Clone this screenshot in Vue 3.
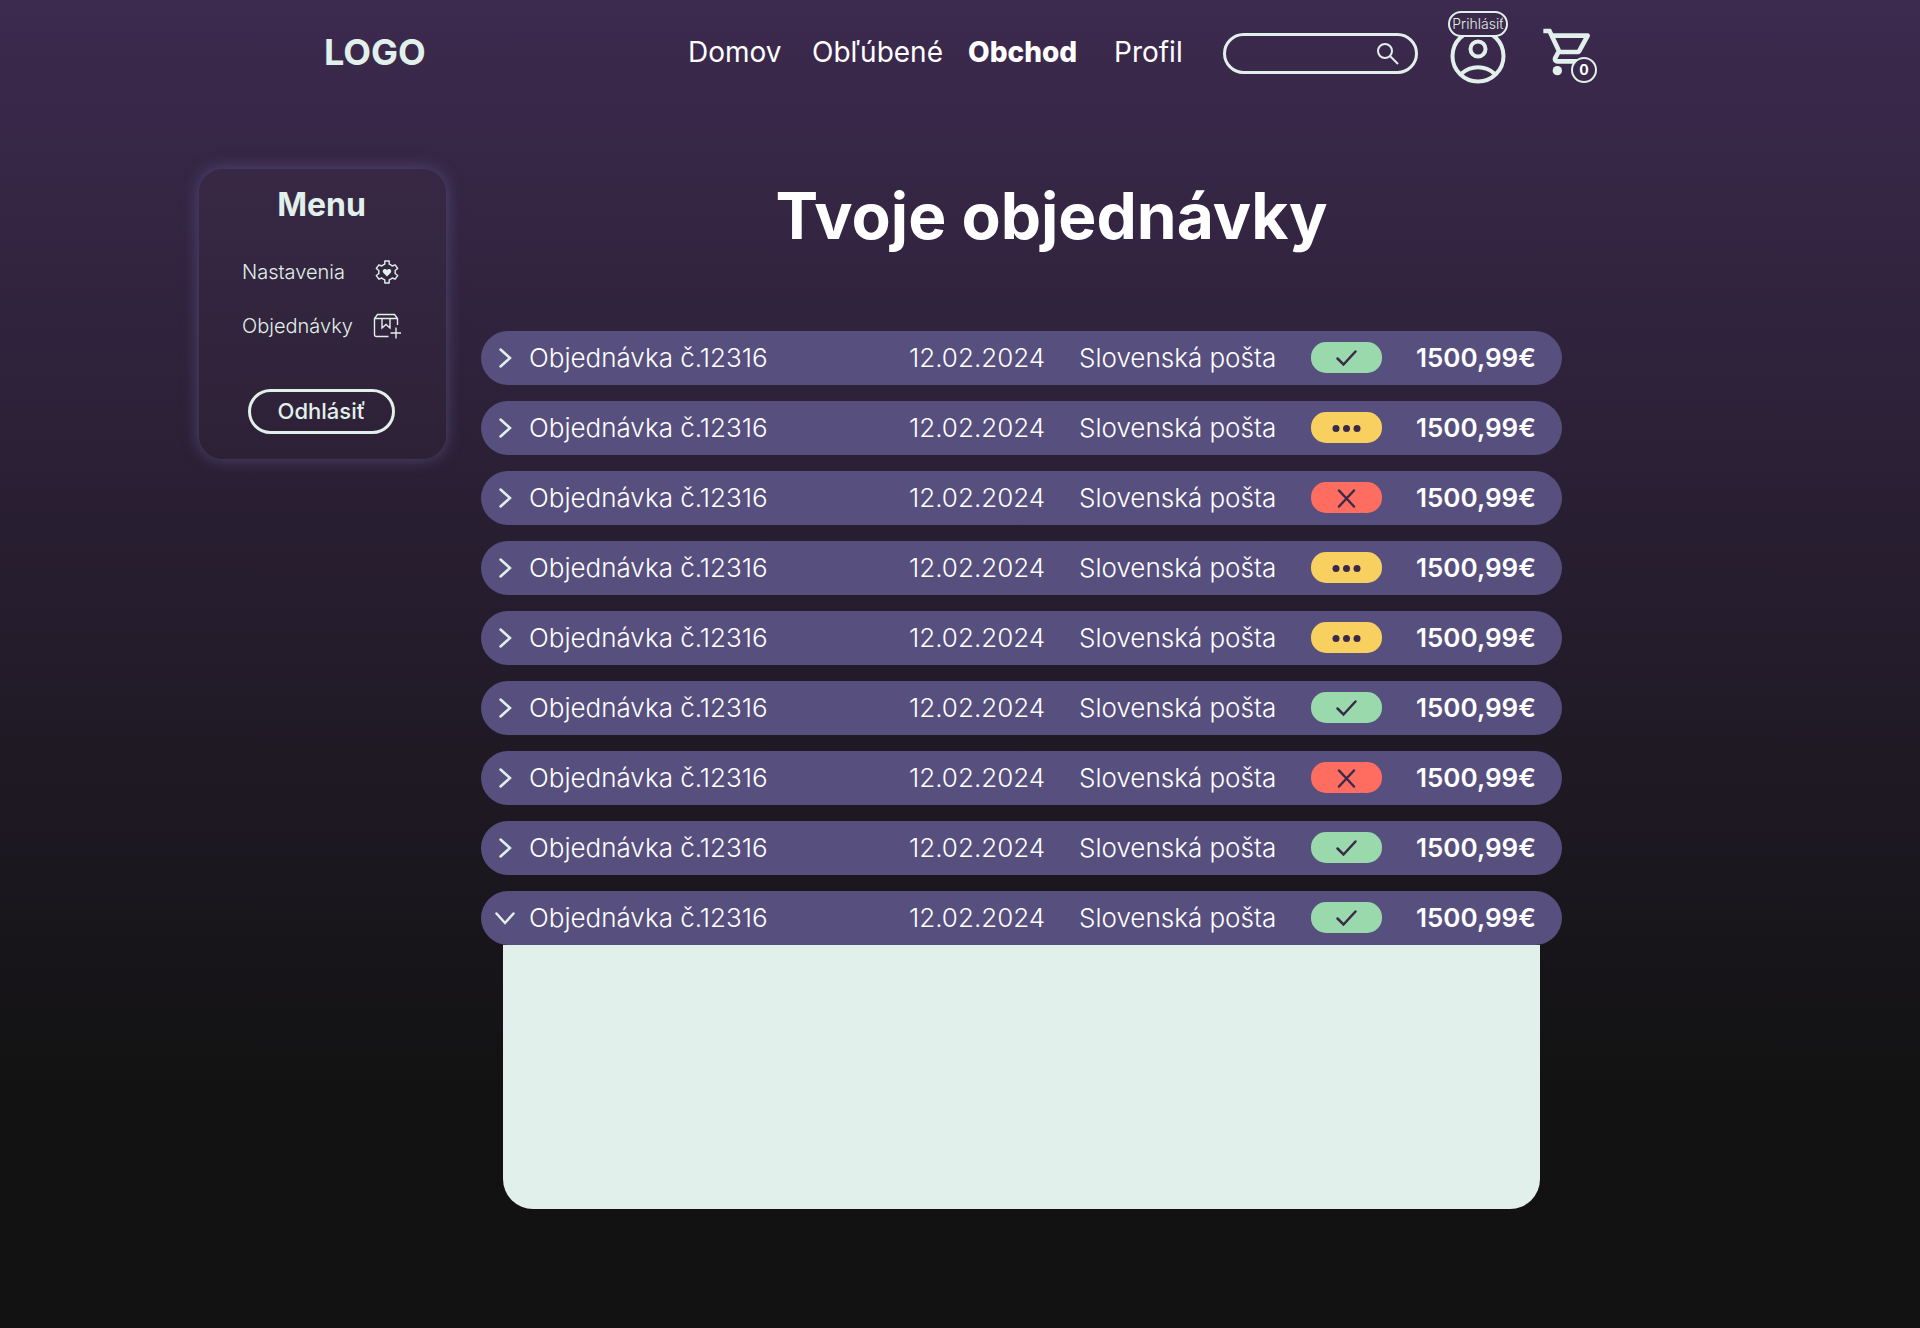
<script setup>
import { ref } from 'vue'

const links = [
  { label: 'Domov' },
  { label: 'Obľúbené' },
  { label: 'Obchod', active: true },
  { label: 'Profil' },
]

const statuses = ['done', 'pending', 'failed', 'pending', 'pending', 'done', 'failed', 'done', 'done']
const statusLabels = { done: 'Doručená', pending: 'Spracováva sa', failed: 'Zrušená' }

const orders = ref(
  statuses.map((status, index) => ({
    id: index,
    name: 'Objednávka č.12316',
    date: '12.02.2024',
    carrier: 'Slovenská pošta',
    price: '1500,99€',
    status,
    open: index === statuses.length - 1,
  })),
)

const query = ref('')
</script>

<template>
  <div class="page">
    <header class="header">
      <a class="logo" href="#">LOGO</a>
      <nav class="nav">
        <a v-for="link in links" :key="link.label" href="#" :class="{ active: link.active }">{{ link.label }}</a>
      </nav>
      <form class="search" role="search" @submit.prevent>
        <input v-model="query" type="search" aria-label="Hľadať" />
        <button type="submit" aria-label="Hľadať">
          <svg width="24" height="24" viewBox="0 0 24 24" fill="none" stroke="currentColor" stroke-width="2">
            <circle cx="9" cy="9" r="7" />
            <path d="M14 14l8 8" />
          </svg>
        </button>
      </form>
      <a class="account" href="#">
        <svg width="56" height="56" viewBox="0 0 56 56" fill="none" stroke="currentColor" stroke-width="4">
          <circle cx="28" cy="28" r="25.500" />
          <circle cx="28" cy="21" r="7.500" />
          <path d="M11 46C21 37 35 37 45 46" />
        </svg>
        <span class="tag">Prihlásiť</span>
      </a>
      <a class="cart" href="#" aria-label="Košík">
        <svg width="56" height="56" viewBox="0 0 24 24" fill="currentColor">
          <path d="M15.55 13c.75 0 1.41-.41 1.75-1.03l3.58-6.49c.37-.66-.11-1.48-.87-1.48H5.21l-.94-2H1v2h2l3.6 7.59-1.35 2.44C4.52 15.37 5.48 17 7 17h12v-2H7l1.1-2h7.45zM6.16 6h12.15l-2.76 5H8.53L6.16 6z" />
          <circle cx="7" cy="20" r="2" />
        </svg>
        <span class="count">0</span>
      </a>
    </header>

    <div class="content">
      <aside class="menu">
        <h2>Menu</h2>
        <a class="item" href="#">
          <span>Nastavenia</span>
          <svg width="28" height="28" viewBox="0 0 28 28" fill="none" stroke="currentColor" stroke-width="1.4" stroke-linejoin="round">
            <path d="M11.8 3h4.4v3.2q1.7.6 3 1.8l2.9-1.2 2.6 3.7-2.6 2q.3 1.5 0 3l2.6 2-2.6 3.7-2.9-1.2q-1.3 1.2-3 1.8V25h-4.4v-3.2q-1.7-.6-3-1.8l-2.9 1.2-2.6-3.7 2.6-2q-.3-1.5 0-3l-2.6-2 2.6-3.7 2.9 1.2q1.3-1.2 3-1.8z" />
            <path fill="currentColor" stroke="none" d="M14 18.4l-3.5-3.5c-2.4-2.6 1.3-5.4 3.5-3 2.2-2.4 5.9.4 3.5 3z" />
          </svg>
        </a>
        <a class="item" href="#">
          <span>Objednávky</span>
          <svg width="28" height="28" viewBox="0 0 28 28" fill="none" stroke="currentColor" stroke-width="1.4">
            <path d="M15.5 24.5H3.5q-2 0-2-2V6.5l3-4h17l3 4V13M1.5 6.5h23M9 6.5v9.5l4-3.5 4 3.5V6.5M23 15.500v11M17.500 21h10.500" />
          </svg>
        </a>
        <button class="logout" type="button">Odhlásiť</button>
      </aside>

      <main class="main">
        <h1>Tvoje objednávky</h1>
        <ul class="orders">
          <li v-for="order in orders" :key="order.id">
            <button class="row" type="button" :aria-expanded="order.open" @click="order.open = !order.open">
              <svg class="chevron" :class="{ open: order.open }" width="20" height="20" viewBox="0 0 20 20" fill="none" stroke="currentColor" stroke-width="2.5" stroke-linecap="round">
                <path d="M5.5 1.5l9.5 8.5-9.5 8.5" />
              </svg>
              <span>{{ order.name }}</span>
              <span>{{ order.date }}</span>
              <span>{{ order.carrier }}</span>
              <span class="badge" :class="order.status" role="img" :aria-label="statusLabels[order.status]">
                <svg width="32" height="24" viewBox="0 0 32 24" fill="none" stroke="currentColor" stroke-width="2.5" stroke-linecap="round">
                  <path v-if="order.status === 'done'" d="M6.5 12.5l6 6L24.500 5.500" />
                  <path v-else-if="order.status === 'failed'" d="M8 4.500l15 16M23 4.500l-15 16" />
                  <g v-else fill="currentColor" stroke="none">
                    <circle cx="5" cy="12.500" r="3.500" />
                    <circle cx="15.500" cy="12.500" r="3.500" />
                    <circle cx="26" cy="12.500" r="3.500" />
                  </g>
                </svg>
              </span>
              <span class="price">{{ order.price }}</span>
            </button>
            <div v-if="order.open" class="details"></div>
          </li>
        </ul>
      </main>
    </div>
  </div>
</template>

<style>
body {
  margin: 0;
  background: #121212;
}
</style>

<style scoped>
.page {
  --mint: #e1f0ea;
  --ink: #3b294b;
  box-sizing: border-box;
  min-height: 100vh;
  padding: 0 323px 119px 199px;
  background: linear-gradient(180deg, #3d2a4f 0%, #121212 82%);
  color: #fff;
  font-family: Inter, sans-serif;
}

a {
  color: inherit;
  text-decoration: none;
}

button,
input {
  font: inherit;
  color: inherit;
}

svg {
  display: block;
}

.header {
  display: flex;
  align-items: center;
  height: 103px;
  padding-left: 125px;
}

.logo {
  margin-right: auto;
  color: var(--mint);
  font-size: 36px;
  font-weight: 700;
}

.nav {
  display: grid;
  grid-template-columns: 124px 156px 146px 109px;
  font-size: 28px;
}

.nav .active {
  font-weight: 800;
}

.search {
  box-sizing: border-box;
  display: flex;
  align-items: center;
  width: 195px;
  height: 41px;
  margin: 4px 32px 0 0;
  padding: 0 15px;
  border: 3px solid var(--mint);
  border-radius: 21px;
  color: var(--mint);
}

.search input {
  flex: 1;
  min-width: 0;
  border: 0;
  outline: 0;
  background: none;
  font-size: 16px;
}

.search button {
  padding: 0;
  border: 0;
  background: none;
}

.account,
.cart {
  position: relative;
  color: var(--mint);
}

.account {
  margin: 9px 35px 0 0;
}

.tag {
  position: absolute;
  top: -17px;
  left: -2px;
  box-sizing: border-box;
  display: flex;
  justify-content: center;
  width: 60px;
  height: 26px;
  border: 2px solid var(--mint);
  border-radius: 13px;
  background: var(--ink);
  font-size: 14px;
  font-weight: 300;
  line-height: 22px;
}

.count {
  position: absolute;
  right: 0;
  bottom: -3px;
  box-sizing: border-box;
  width: 26px;
  height: 26px;
  border: 2px solid var(--mint);
  border-radius: 50%;
  background: var(--ink);
  color: #fff;
  font-size: 14px;
  font-weight: 700;
  line-height: 22px;
  text-align: center;
}

.content {
  display: flex;
  align-items: flex-start;
  gap: 35px;
  padding: 66px 35px 0 0;
}

.menu {
  box-sizing: border-box;
  flex: none;
  display: flex;
  flex-direction: column;
  width: 247px;
  padding: 16px 45px 25px 43px;
  border-radius: 24px;
  background: linear-gradient(180deg, #382845, #2d2136);
  box-shadow: 0 0 16px #57507fdd;
  color: var(--mint);
}

.menu h2 {
  margin: 0 0 28px;
  font-size: 32px;
  font-weight: 700;
  line-height: 40px;
  text-align: center;
}

.item {
  display: flex;
  align-items: center;
  justify-content: space-between;
  height: 38px;
  margin-bottom: 16px;
  font-size: 20px;
  font-weight: 300;
}

.logout {
  align-self: center;
  width: 147px;
  height: 45px;
  margin-top: 28px;
  padding: 0 0 1px;
  border: 3px solid var(--mint);
  border-radius: 23px;
  background: none;
  font-size: 22px;
  font-weight: 500;
}

.main {
  flex: 1;
  min-width: 0;
}

h1 {
  margin: 7px 0 75px;
  padding-left: 60px;
  font-size: 64px;
  font-weight: 700;
  line-height: 80px;
  text-align: center;
}

.orders {
  display: flex;
  flex-direction: column;
  gap: 16px;
  margin: 0;
  padding: 0;
  list-style: none;
}

.row {
  display: grid;
  grid-template-columns: 34px 1fr 170px 232px 105px 120px;
  align-items: center;
  width: 100%;
  height: 54px;
  padding: 0 26px 1px 14px;
  border: 0;
  border-radius: 27px;
  background: #57507f;
  font-size: 26px;
  font-weight: 300;
  text-align: left;
}

.chevron {
  color: var(--mint);
}

.chevron.open {
  transform: rotate(90deg);
}

.badge {
  display: flex;
  align-items: center;
  justify-content: center;
  width: 71px;
  height: 31px;
  border-radius: 15px;
  color: var(--ink);
}

.done {
  background: #9ad9ac;
}

.pending {
  background: #f8d060;
}

.failed {
  background: #ff6d61;
}

.price {
  font-weight: 600;
}

.details {
  height: 264px;
  margin: 0 22px;
  border-radius: 0 0 30px 30px;
  background: var(--mint);
}
</style>
